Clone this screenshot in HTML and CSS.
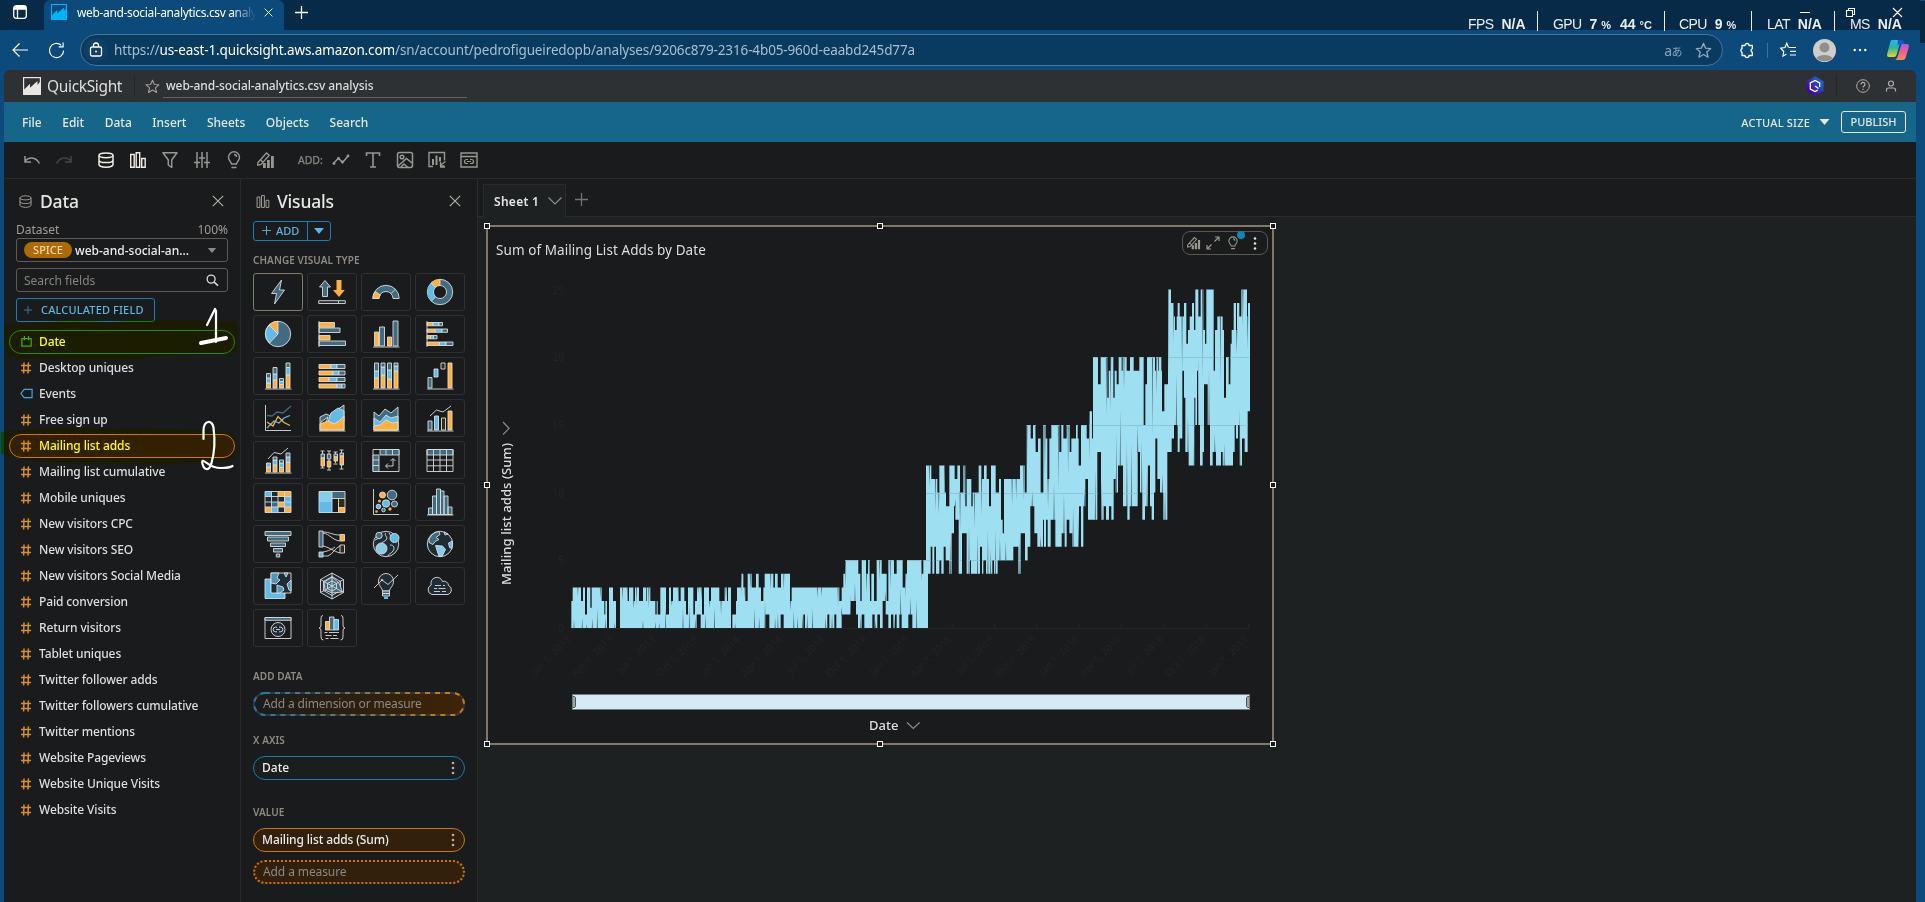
FILE: index.html
```html
<!DOCTYPE html>
<html lang="en">
<head>
<meta charset="utf-8">
<title>web-and-social-analytics.csv analysis</title>
<link rel="stylesheet" href="styles.css">
</head>
<body>
<svg class="defs" width="0" height="0">
  <symbol id="hash" viewBox="0 0 10 12"><path d="M3 .5 2.6 11.500M7.400.500 7 11.500M0 3.500h10M0 8.500h10" fill="none" stroke="currentColor" stroke-width="1.500"/></symbol>
  <symbol id="db" viewBox="0 0 16 16"><g fill="none" stroke="currentColor" stroke-width="1.200"><ellipse cx="8" cy="3.500" rx="6.800" ry="2.500"/><path d="M1.200 3.500v9c0 1.400 3 2.700 6.800 2.700s6.800-1.300 6.800-2.700v-9M1.200 8c0 1.400 3 2.600 6.800 2.600s6.800-1.200 6.800-2.600"/></g></symbol>
  <symbol id="bars" viewBox="0 0 16 16"><path d="M.7 2.500h3.500v12.800H.7zM6.200.7h3.500v14.600H6.200zM11.700 6.500h3.500v8.800h-3.500z" fill="none" stroke="currentColor" stroke-width="1.200"/></symbol>
  <symbol id="x" viewBox="0 0 12 12"><path d="M.8.800l10.400 10.400M11.200.800.800 11.200" fill="none" stroke="currentColor" stroke-width="1.200"/></symbol>
  <symbol id="plus" viewBox="0 0 12 12"><path d="M6 0v12M0 6h12" fill="none" stroke="currentColor" stroke-width="1.200"/></symbol>
  <symbol id="tri" viewBox="0 0 10 6"><path d="M0 0h10L5 6z" fill="currentColor"/></symbol>
  <symbol id="chev" viewBox="0 0 14 8"><path d="M.5.500 7 7 13.500.500" fill="none" stroke="currentColor" stroke-width="1.200"/></symbol>
  <symbol id="star" viewBox="0 0 16 16"><path d="M8 1.300l2 4.500 4.800.4-3.700 3.200 1.200 4.900L8 11.700l-4.300 2.600 1.200-4.900L1.200 6.200l4.800-.4z" fill="none" stroke="currentColor" stroke-width="1.200" stroke-linejoin="round"/></symbol>
  <symbol id="bulb" viewBox="0 0 16 18"><path d="M5.500 13c0-2-3-3.200-3-6.700a5.500 5.500 0 0 1 11 0c0 3.500-3 4.700-3 6.700zM5.500 16.500h5M8 3.500c1.500 0 2.500 1 2.500 2.500" fill="none" stroke="currentColor" stroke-width="1.400"/></symbol>
  <symbol id="pencil" viewBox="0 0 18 18"><path d="M1 11.500 9.500 2l2.800 2.300L4 13.500l-3.500.7zM3.500 9l2.500 2.300" fill="none" stroke="currentColor" stroke-width="1.300"/><path d="M6 12h2.800v5H6zM10 9h2.800v8H10zM14 5h2.800v12H14z" fill="currentColor"/></symbol>
  <symbol id="dots" viewBox="0 0 4 14"><circle cx="2" cy="2" r="1.300" fill="currentColor"/><circle cx="2" cy="7" r="1.300" fill="currentColor"/><circle cx="2" cy="12" r="1.300" fill="currentColor"/></symbol>
  <symbol id="qs" viewBox="0 0 18 18"><path fill-rule="evenodd" fill="currentColor" d="M0 0h18v18H0zM1.200 1.200v11.300L7 6.800v4L14.500 4v4l2.300-3V1.200z"/></symbol>
</svg>

<div class="window">
  <header class="tabstrip">
    <svg class="workspaces" viewBox="0 0 14 14"><g fill="none" stroke="#fff" stroke-width="1.300"><rect x=".7" y=".7" width="12.600" height="12.600" rx="2.500"/><path d="M4.500 4v9M1 4h12"/></g><path d="M1 1h12v3H1z" fill="#fff"/></svg>
    <div class="tab">
      <svg class="tab-logo"><use href="#qs"/></svg>
      <span class="tab-title">web-and-social-analytics.csv analysis</span>
      <svg class="tab-x"><use href="#x"/></svg>
    </div>
    <svg class="tab-new"><use href="#plus"/></svg>
    <div class="winctl">
      <svg viewBox="0 0 104 12" width="104" height="12"><path d="M0 5.500h10M46.500 3.500h6v6h-6zM48.500 3.500v-2h6v6h-2M93 1l9 9M102 1l-9 9" fill="none" stroke="#fff" stroke-width="1.100"/></svg>
    </div>
    <div class="perf">
      <div class="fps"><span>FPS</span><b>N/A</b></div>
      <div class="gpu"><span>GPU</span><b>7 <small>%</small></b><b>44 <small>°C</small></b></div>
      <div class="cpu"><span>CPU</span><b>9 <small>%</small></b></div>
      <div class="lat"><span>LAT</span><b>N/A</b></div>
      <div class="ms"><span>MS</span><b>N/A</b></div>
    </div>
  </header>

  <div class="addressbar">
    <svg class="nav-back" viewBox="0 0 16 14"><path d="M16 7H1M7.500.500 1 7l6.500 6.500" fill="none" stroke="#fff" stroke-width="1.200"/></svg>
    <svg class="nav-reload" viewBox="0 0 18 18"><path d="M16.500 9a7.500 7.500 0 1 1-2.500-5.600M16 .5v4.700h-4.700" fill="none" stroke="#fff" stroke-width="1.200"/></svg>
    <div class="url">
      <span class="lock"><svg viewBox="0 0 14 16" width="14" height="16"><g fill="none" stroke="#fff" stroke-width="1.300"><rect x="1.500" y="5" width="11" height="9" rx="1.500"/><path d="M4.500 5V3.500a2.500 2.500 0 0 1 5 0V5"/></g><circle cx="7" cy="9.500" r="1" fill="#fff"/></svg></span>
      <span class="url-text">https://<em>us-east-1.quicksight.aws.amazon.com</em>/sn/account/pedrofigueiredopb/analyses/9206c879-2316-4b05-960d-eaabd245d77a</span>
      <span class="translate">a<i>あ</i></span>
      <svg class="fav"><use href="#star"/></svg>
    </div>
    <svg class="ext" viewBox="0 0 16 16"><path d="M3 3.500h3a2 2 0 0 1 4 0h3.300v3.300a1.700 1.700 0 0 0 0 3.300v3.400H10a2 2 0 0 1-4 0H3v-3.200a2 2 0 0 1 0-3.600z" fill="none" stroke="#fff" stroke-width="1.300" stroke-linejoin="round"/></svg>
    <i class="bar-sep"></i>
    <svg class="favs" viewBox="0 0 16 16"><path d="M8.500 5.500 6.800 1.300 5 5.500.7 6.200 3.700 9.500 3 14l3.500-2M9 5.500h7M10 9.300h6M10 13h6" fill="none" stroke="#fff" stroke-width="1.200"/></svg>
    <svg class="avatar" viewBox="0 0 23 23"><circle cx="11.500" cy="11.500" r="11.500" fill="#d0cecb"/><circle cx="11.500" cy="8.500" r="5" fill="#918f8c"/><path d="M3.500 19a9 5.500 0 0 1 16 0 11.500 11.500 0 0 1-16 0z" fill="#918f8c"/></svg>
    <svg class="more" viewBox="0 0 14 4"><circle cx="1.700" cy="2" r="1.200" fill="#fff"/><circle cx="7" cy="2" r="1.200" fill="#fff"/><circle cx="12.300" cy="2" r="1.200" fill="#fff"/></svg>
    <svg class="copilot" viewBox="0 0 22 20">
      <defs><linearGradient id="ca" x2="0" y2="1"><stop offset="0" stop-color="#2bb4f0"/><stop offset=".45" stop-color="#28b7a0"/><stop offset="1" stop-color="#f5d21c"/></linearGradient><linearGradient id="cb" x2="0" y2="1"><stop offset="0" stop-color="#b05ae0"/><stop offset=".5" stop-color="#f06090"/><stop offset="1" stop-color="#ff8c4a"/></linearGradient></defs>
      <path d="M5 0h9l-4.500 15Q9 17 7 17H2Q-.5 17 .3 13.500L3 3Q3.700 0 5 0z" fill="url(#ca)"/><path d="M11 0h4q1.500 0 2.500 4h-4.500q-2 0-2.500 2z" fill="#1757c8"/><path d="M14.500 4H20q2.500 0 1.700 3.500L19 16.500Q18 20 16 20H8.500Q10 19 11 15.500z" fill="url(#cb)"/>
    </svg>
  </div>

  <main class="page">
    <div class="brandbar">
      <svg class="brand-logo"><use href="#qs"/></svg>
      <span class="brand">QuickSight</span>
      <i class="brand-sep"></i>
      <svg class="brand-star"><use href="#star"/></svg>
      <span class="doc-name">web-and-social-analytics.csv analysis</span>
      <span class="brand-right">
        <svg class="q-icon" viewBox="0 0 18 20"><defs><linearGradient id="qg" x1="0" y1="1" x2="1" y2="0"><stop offset=".2" stop-color="#4b00a8"/><stop offset="1" stop-color="#0a84d8"/></linearGradient></defs><path d="M9 .3l8.500 4.900v9.600L9 19.700.5 14.800V5.200z" fill="url(#qg)"/><path d="M12.500 12.500 9 10M13.700 11V7L9 4.500 4.300 7v6L9 15.500l2.700-1.300" fill="none" stroke="#fff" stroke-width="1.300"/></svg>
        <i class="brand-sep"></i>
        <svg class="help" viewBox="0 0 14 14"><circle cx="7" cy="7" r="6.300" fill="none" stroke="currentColor"/><path d="M5 5.500a2 2 0 1 1 2.700 1.800q-.7.300-.7 1.200M7 9.700V11" fill="none" stroke="currentColor" stroke-width="1.200"/></svg>
        <svg class="user" viewBox="0 0 12 12"><circle cx="6" cy="3.500" r="2.500" fill="none" stroke="currentColor" stroke-width="1.200"/><path d="M1.500 11.500V10Q1.500 8 3.500 8h5q2 0 2 2v1.500" fill="none" stroke="currentColor" stroke-width="1.200"/></svg>
      </span>
    </div>

    <nav class="menubar">
      <span>File</span><span>Edit</span><span>Data</span><span>Insert</span><span>Sheets</span><span>Objects</span><span>Search</span>
      <div class="menu-right"><span class="size">ACTUAL SIZE</span><svg class="size-tri"><use href="#tri"/></svg><span class="publish">PUBLISH</span></div>
    </nav>

    <div class="toolbar">
      <svg viewBox="0 0 18 18"><path d="M2 5v6h6M2 10.500C5 6 12.500 5 16.500 12.500" fill="none" stroke="currentColor" stroke-width="1.500"/></svg>
      <svg class="dim" viewBox="0 0 18 18"><path d="M16 5v6h-6M16 10.500C13 6 5.500 5 1.500 12.500" fill="none" stroke="currentColor" stroke-width="1.500"/></svg>
      <svg class="on gap" viewBox="0 0 16 16"><g fill="none" stroke="currentColor" stroke-width="1.500"><ellipse cx="8" cy="3.300" rx="7" ry="2.400"/><path d="M1 3.500v9c0 1.400 3 2.700 7 2.700s7-1.300 7-2.700v-9M1 8c0 1.400 3 2.600 7 2.600S15 9.400 15 8"/></g></svg>
      <svg class="on" viewBox="0 0 16 16"><path d="M.7 2.500h3.500v12.800H.7zM6.200.7h3.500v14.600H6.200zM11.700 6.500h3.500v8.800h-3.500z" fill="none" stroke="currentColor" stroke-width="1.400"/></svg>
      <svg viewBox="0 0 18 18"><path d="M2 1.700h14L10.700 9v7.500L7.300 14V9z" fill="none" stroke="currentColor" stroke-width="1.500" stroke-linejoin="round"/></svg>
      <svg viewBox="0 0 18 18"><path d="M4 1v16M9 1v16M14 1v16M1 11.500h6M6 7h6M11 11.500h6" fill="none" stroke="currentColor" stroke-width="1.500"/></svg>
      <svg><use href="#bulb"/></svg>
      <svg><use href="#pencil"/></svg>
      <span class="add-label">ADD:</span>
      <svg viewBox="0 0 18 18"><path d="M1.500 12.500 6.500 7l4 4.500 6-7" fill="none" stroke="currentColor" stroke-width="1.500"/><circle cx="2" cy="12.500" r="1.400" fill="currentColor"/><circle cx="6.500" cy="7.500" r="1.400" fill="currentColor"/><circle cx="10.500" cy="11" r="1.400" fill="currentColor"/><circle cx="16" cy="5" r="1.400" fill="currentColor"/></svg>
      <svg viewBox="0 0 18 18"><path d="M2.500 5V2h13v3M9 2v14M6 16h6" fill="none" stroke="currentColor" stroke-width="1.600"/></svg>
      <svg viewBox="0 0 18 18"><g fill="none" stroke="currentColor" stroke-width="1.500"><rect x="1.500" y="1.500" width="15" height="15" rx="2"/><circle cx="6" cy="6" r="1.800"/><path d="M2 15 10.500 7.500 16 12M5 16l3-3 4 3.500"/></g></svg>
      <svg viewBox="0 0 18 18"><path d="M5 15.500H1V1.500h15.500v8" fill="none" stroke="currentColor" stroke-width="1.400"/><path d="M4 8h2v6H4zM7.500 4.500h2V14h-2zM11 6h2v4.500h-2z" fill="currentColor"/><path d="M17.500 10.500 12 14.500M12.500 11v4h4M17 16h-5" fill="none" stroke="currentColor" stroke-width="1.300"/></svg>
      <svg viewBox="0 0 18 18"><path d="M1 2h16v14H1zM1 5.500h16" fill="none" stroke="currentColor" stroke-width="1.400"/><path d="M8 8.500H6.500a2 2 0 0 0 0 4H8M10 8.500h1.500a2 2 0 0 1 0 4H10M7 10.500h4" fill="none" stroke="currentColor" stroke-width="1.200"/></svg>
    </div>

    <div class="workspace">
      <section class="panel data-panel">
        <div class="panel-head"><svg class="panel-icon"><use href="#db"/></svg><h2>Data</h2><svg class="close"><use href="#x"/></svg></div>
        <div class="ds-row"><span>Dataset</span><span>100%</span></div>
        <div class="box select"><span class="spice">SPICE</span><span class="ds-name">web-and-social-an...</span><svg class="sel-tri"><use href="#tri"/></svg></div>
        <div class="box search"><span>Search fields</span><svg class="mag" viewBox="0 0 14 14"><circle cx="5.500" cy="5.500" r="4.300" fill="none" stroke="currentColor" stroke-width="1.400"/><path d="M8.700 8.700 13 12.500" stroke="currentColor" stroke-width="1.600"/></svg></div>
        <div class="calc"><svg><use href="#plus"/></svg><span>CALCULATED FIELD</span></div>
        <ul class="fields">
          <li class="picked-date"><svg class="cal" viewBox="0 0 13 13"><path d="M1 3h11v9H1zM4 0v5M9 0v5" fill="none" stroke="currentColor" stroke-width="1.400"/></svg>Date</li>
          <li><svg><use href="#hash"/></svg>Desktop uniques</li>
          <li><svg class="tag" viewBox="0 0 14 11"><path d="M13 1v9H4.500L1 5.500 4.500 1z" fill="none" stroke="currentColor" stroke-width="1.300"/></svg>Events</li>
          <li><svg><use href="#hash"/></svg>Free sign up</li>
          <li class="picked-measure"><svg><use href="#hash"/></svg>Mailing list adds</li>
          <li><svg><use href="#hash"/></svg>Mailing list cumulative</li>
          <li><svg><use href="#hash"/></svg>Mobile uniques</li>
          <li><svg><use href="#hash"/></svg>New visitors CPC</li>
          <li><svg><use href="#hash"/></svg>New visitors SEO</li>
          <li><svg><use href="#hash"/></svg>New visitors Social Media</li>
          <li><svg><use href="#hash"/></svg>Paid conversion</li>
          <li><svg><use href="#hash"/></svg>Return visitors</li>
          <li><svg><use href="#hash"/></svg>Tablet uniques</li>
          <li><svg><use href="#hash"/></svg>Twitter follower adds</li>
          <li><svg><use href="#hash"/></svg>Twitter followers cumulative</li>
          <li><svg><use href="#hash"/></svg>Twitter mentions</li>
          <li><svg><use href="#hash"/></svg>Website Pageviews</li>
          <li><svg><use href="#hash"/></svg>Website Unique Visits</li>
          <li><svg><use href="#hash"/></svg>Website Visits</li>
        </ul>
      </section>

      <section class="panel visuals-panel">
        <div class="panel-head"><svg class="panel-icon"><use href="#bars"/></svg><h2>Visuals</h2><svg class="close"><use href="#x"/></svg></div>
        <div class="add-btn"><span class="add-main"><svg><use href="#plus"/></svg>ADD</span><span class="add-more"><svg><use href="#tri"/></svg></span></div>
        <h3>CHANGE VISUAL TYPE</h3>
        <div class="types">
          <i class="sel"><svg viewBox="0 0 28 28"><path class="d w" d="M17.500 2 7.500 15.500h5L10.500 26 20.500 12h-5z"/></svg></i>
          <i><svg viewBox="0 0 28 28"><path class="d w" d="M7 2.500 12.500 9h-3v9.500H4.500V9h-3z"/><path class="o" d="M18.500 2h5v10h3.300L21 19l-6-7h3.500z"/><path class="n w" d="M.7 22.700h26.600v2.800H.7zM20.500 22.700v3"/></svg></i>
          <i><svg viewBox="0 0 28 28"><path class="d w" d="M.8 20.500a13.200 13.200 0 0 1 26.400 0H21a7 7 0 0 0-14 0z"/><path class="o w" d="M.8 20.500q0-4 2.500-7l5 3.500Q7 18.500 7 20.500z"/><path class="w" d="m23.500 11-4.300 4.500"/></svg></i>
          <i><svg viewBox="0 0 28 28"><circle class="d w" cx="14" cy="14" r="12.700"/><path class="l" d="M14 14 5.500 23A12.700 12.700 0 0 1 5 5z"/><path class="o" d="M14 14 5 5a12.700 12.700 0 0 1 9-3.700z"/><path class="w" d="M14 1.300V7M5 5l5 5M5.500 23l5-5"/><circle class="bg w" cx="14" cy="14" r="6.500"/></svg></i>

          <i><svg viewBox="0 0 28 28"><circle class="d w" cx="14" cy="14" r="12.700"/><path class="l w" d="M14 14 5.500 23A12.700 12.700 0 0 1 5 5z"/><path class="o w" d="M14 14 5 5a12.700 12.700 0 0 1 9-3.700z"/></svg></i>
          <i><svg viewBox="0 0 28 28"><path class="o w" d="M1 2.500h15.500v4.800H1zM1 15.500h11v4.500H1z"/><path class="d w" d="M1 8h21v4.500H1zM1 21h26.500v4.500H1z"/><path class="w" d="M1 1v26"/></svg></i>
          <i><svg viewBox="0 0 28 28"><path class="o w" d="M2.500 12h4v14h-4zM15.500 17h4v9h-4z"/><path class="d w" d="M7.500 7h5v19h-5zM21 1h5v25h-5z"/><path class="w" d="M1 27h26.500"/></svg></i>
          <i><svg viewBox="0 0 28 28"><path class="o w" d="M1 2.500h6v3.300H1zM1 9h8v3.300H1zM1 15.500h3.500v3.300H1zM1 22h12.500v3.500H1z"/><path class="l w" d="M7 2.500h6v3.300H7zM9 9h7v3.300H9zM4.500 15.500h3v3.300h-3zM13.500 22H20v3.500h-6.500z"/><path class="d w" d="M13 2.500h3.500v3.300H13zM16 9h5.500v3.300H16zM7.500 15.500h3.500v3.300H7.500zM20 22h7v3.500h-7z"/><path class="w" d="M1 1v26"/></svg></i>

          <i><svg viewBox="0 0 28 28"><path class="o w" d="M2.500 21h4v5h-4zM9 18h4v8H9zM15.500 22.500h4V26h-4zM22 13h4v13h-4z"/><path class="l w" d="M2.500 16h4v5h-4zM9 12h4v6H9zM15.500 19.500h4v3h-4zM22 5.500h4V13h-4z"/><path class="d w" d="M2.500 11.500h4V16h-4zM9 5.500h4V12H9zM15.500 16.500h4v3h-4zM22 1h4v4.500h-4z"/><path class="w" d="M1 27h26.500"/></svg></i>
          <i><svg viewBox="0 0 28 28"><path class="o w" d="M1 2.500h12v4H1zM1 9h14v4H1zM1 15.500h10v4H1zM1 22h18v4H1z"/><path class="l w" d="M13 2.500h6v4h-6zM15 9h6v4h-6zM11 15.500h8v4h-8zM19 22h5v4h-5z"/><path class="d w" d="M19 2.500h8v4h-8zM21 9h6v4h-6zM19 15.500h8v4h-8zM24 22h3v4h-3z"/></svg></i>
          <i><svg viewBox="0 0 28 28"><path class="o w" d="M2.500 16h4v10h-4zM9 13h4v13H9zM15.500 17h4v9h-4zM22 9h4v17h-4z"/><path class="l w" d="M2.500 9h4v7h-4zM9 5h4v8H9zM15.500 8h4v9h-4zM22 4h4v5h-4z"/><path class="d w" d="M2.500 1h4v8h-4zM9 1h4v4H9zM15.500 1h4v7h-4zM22 1h4v3h-4z"/><path class="w" d="M1 27h26.500"/></svg></i>
          <i><svg viewBox="0 0 28 28"><path class="d w" d="M2 15.500h4V26H2z"/><path class="l w" d="M8 7h4v8H8z"/><path class="k w" d="M15 1h4v6h-4z"/><path class="o w" d="M22 1h4v25h-4z"/><path class="w" d="M1 27h26.500"/></svg></i>

          <i><svg viewBox="0 0 28 28"><path class="w" d="M1.500 1v25.500H27"/><path class="sd" d="M3 11.500l5 .5 5-4 6 1 8-7"/><path class="sl" d="M3 24l7-7 5 2 5-5 6-2.500"/><path class="so" d="M3 18l6 4 5-9.500 6 6 6 3"/></svg></i>
          <i><svg viewBox="0 0 28 28"><path class="d w" d="M2 26V13l6-3 5 2 6-6 7-5v25z"/><path class="l w" d="M10 18l3-9 7-5 6 3v10l-6 4z"/><path class="k w" d="M3 18l7-5-3 8-4 3z"/><path class="o w" d="M2 26v-6l8-3 6 3 5-3 5-5v14z"/><path class="w" d="M1 27h26.500"/></svg></i>
          <i><svg viewBox="0 0 28 28"><path class="d w" d="M2 26V8l5 4 6-7 6 4 7-6v23z"/><path class="l w" d="M2 26V14l6 4 6-7 5 3 7-2v14z"/><path class="o w" d="M2 26v-4l6-1 6-5 6 3 6-1v8z"/><path class="w" d="M1 27h26.500"/></svg></i>
          <i><svg viewBox="0 0 28 28"><path class="d w" d="M2 17h4v9H2z"/><path class="l w" d="M8.500 12h4v14h-4z"/><path class="k w" d="M15.500 14h4v12h-4z"/><path class="o w" d="M22 7h4v19h-4z"/><path class="w" d="M4 12l6.500-6L17 8l8-6M1 27h26.500"/></svg></i>

          <i><svg viewBox="0 0 28 28"><path class="o w" d="M2.500 21h4v5h-4zM9 19h4v7H9zM15.500 21.500h4V26h-4zM22 16h4v10h-4z"/><path class="l w" d="M2.500 17h4v4h-4zM9 14h4v5H9zM15.500 17h4v4.500h-4zM22 11h4v5h-4z"/><path class="d w" d="M9 11h4v3H9zM15.500 14h4v3h-4zM22 7h4v4h-4z"/><path class="w" d="M4 13l6-6.500 7 1.500 7-6M1 27h26.500"/></svg></i>
          <i><svg viewBox="0 0 28 28"><path class="w" d="M4.500 5v17M11 5v19M17.500 6v11M23.500 4v19M2.500 5h4M9 5h4M15.500 6h4M21.500 4h4M2.500 22h4M9 24h4M15.500 18h4M21.500 23h4"/><path class="d w" d="M3 8h3.500v4H3zM9.300 8h3.500v5H9.300zM16 8h3.500v3H16zM22 7h3.500v3H22z"/><path class="o w" d="M3 12h3.500v8H3zM9.300 15h3.500v6H9.300zM16 11h3.500v4H16zM22 10h3.500v9H22z"/></svg></i>
          <i><svg viewBox="0 0 28 28"><path class="w" d="M1 3.500h26v22H1z"/><path class="d w" d="M8 3.500h19V9H8zM1 9h6v16.500H1z"/><path class="w" d="M14 3.500V9M20.500 3.500V9M1 14h6M1 19.500h6M21 13v7h-7m4.500-5 2.500-2.500 2.500 2.500M16 17.500 13.500 20l2.500 2.500"/></svg></i>
          <i><svg viewBox="0 0 28 28"><path class="d w" d="M1 3.500h26V9H1z"/><path class="w" d="M1 3.500h26v22H1zM1 14h26M1 19.800h26M7.500 3.500v22M14 3.500v22M20.500 3.500v22"/></svg></i>

          <i><svg viewBox="0 0 28 28"><path class="n" d="M1 3.500h26v21H1z"/><path class="l" d="M1 3.500h6.500v5H1zM20.500 8.500H27V14h-6.500zM7.500 19h6.500v5.500H7.500zM20.500 14H27v5h-6.500z"/><path class="o" d="M14 3.500h13v5H14zM1 19h6.500v5.500H1zM14 14h6.500v5H14zM20.500 19H27v5.500h-6.500z"/><path class="d" d="M7.500 14H14v5H7.500z"/><path class="w" d="M1 3.500h26v21H1zM1 8.500h26M1 14h26M1 19h26M7.500 3.500v21M14 3.500v21M20.500 3.500v21"/></svg></i>
          <i><svg viewBox="0 0 28 28"><path class="l" d="M1 3.500h13v21H1z"/><path class="p" d="M1 3.500h13V14H1z"/><path class="d" d="M14 3.500h13v7H14z"/><path class="k" d="M20.500 10.500H27v9h-6.500z"/><path class="o" d="M20.500 19.500H27v5h-6.500z"/><path class="w" d="M1 3.500h26v21H1zM14 3.500v21M14 10.500h13M20.500 10.500v14M20.500 19.500H27"/></svg></i>
          <i><svg viewBox="0 0 28 28"><path class="w" d="M1.500 1v25.500H27"/><circle class="d w" cx="20" cy="7" r="4.800"/><circle class="o w" cx="10.500" cy="7" r="3"/><circle class="l w" cx="14" cy="15.500" r="3.700"/><circle class="d w" cx="22.500" cy="16" r="3"/><circle class="l w" cx="6.500" cy="18.500" r="2.300"/><circle class="o" cx="7.500" cy="13" r="1.500"/><circle class="d w" cx="11.500" cy="22" r="1.800"/><circle class="o" cx="18" cy="21" r="1.700"/><circle class="o" cx="4.500" cy="23.500" r="1.300"/></svg></i>
          <i><svg viewBox="0 0 28 28"><path class="d w" d="M2.500 20h4v6.500h-4zM6.500 8h4v18.500h-4zM10.500 1h4v25.500h-4zM14.500 3h3.500v23.500h-3.500zM18 8h4v18.500h-4zM22 19h4v7.500h-4z"/><path class="w" d="M1 27h26.500"/></svg></i>

          <i><svg viewBox="0 0 28 28"><path class="d w" d="M1 1.500h26v4H1zM3.500 7h21v4h-21zM6.500 13h15v3.500h-15zM9.500 18.500h9V22h-9zM12.300 24h3.400v3h-3.400z"/></svg></i>
          <i><svg viewBox="0 0 28 28"><path class="w" d="M5 2c7 0 9 3 17 3M5 3c7 1 9 7 17 8M5 16c8 2 10 5 17 7M5 26h5c5-2 7-8 12-10M5 22c6-1 9-3 12-5"/><path class="d w" d="M1 1h4v16H1z"/><path class="l w" d="M1 22h4v5H1z"/><path class="o w" d="M22 4.500h4.500v6.500H22z"/><path class="k w" d="M22 15h4.500v8H22z"/></svg></i>
          <i><svg viewBox="0 0 28 28"><circle class="n w" cx="14" cy="14" r="12.700"/><path class="w" d="M14 3c-3 2 3 4 0 7s-6 2-4 5M18 15c4 0 5 3 3 6s-5 3-5 5M3 10l6-3M17 3l3 5"/><circle class="d w" cx="7" cy="5.500" r="3.200"/><circle class="l w" cx="22.500" cy="8" r="4.500"/><circle class="p w" cx="9.500" cy="18.500" r="5.500"/></svg></i>
          <i><svg viewBox="0 0 28 28"><circle class="n w" cx="14" cy="14" r="12.700"/><path class="d w" d="M3 9Q7 2 13 1.500l1 3-4 3 3 2-4 2-2 3-4-2z"/><path class="p w" d="M9.500 15.500l7 .5 3 3.500-3.500 7h-3z"/><path class="l w" d="M26.500 11l-4 2 1 4.500 2.500 1z"/><path class="d w" d="M18 2l4 2-3 1z"/></svg></i>

          <i><svg viewBox="0 0 28 28"><path class="l w" d="M1 7h6v13h14v6.500H1z"/><path class="n w" d="M7 1h20v20H7z"/><path class="d2 w" d="M7 1h8l-2 5 3 2-4 4-5-1zM13 13l6 2 1 3-4 3h-3zM20 1h4l-2 4zM27 8l-4 4 2 6 2 1z"/></svg></i>
          <i><svg viewBox="0 0 28 28"><path class="n w" d="M14 1l11.500 6.500v13L14 27 2.500 20.500v-13zM14 4.500l8.500 5v9l-8.500 5-8.500-5v-9z"/><path class="d w" d="M14 5l7 6 3.500 9L14 21 7 18 6 10z"/><path class="w" d="M14 1v26M2.500 7.500l23 13M25.500 7.500l-23 13M14 9l4.500 2.500v5L14 19l-4.500-2.500v-5z"/></svg></i>
          <i><svg viewBox="0 0 28 28"><path class="n w" d="M10.500 19c0-3-4-4.500-4-10a7.500 7.500 0 0 1 15 0c0 5.500-4 7-4 10z"/><path class="d w" d="M10.500 19h7v2.500h-7zM10.500 21.500h7V24h-7z"/><path class="l" d="M12 24.500h4v2.500h-4z"/><path class="w" d="M2 16l8-8 6 4.500L26 3"/><circle class="w" cx="10" cy="8" r=".8"/></svg></i>
          <i><svg viewBox="0 0 28 28"><path class="n w" d="M6 22.500a5 5 0 0 1-.8-9.500A5.800 5.800 0 0 1 16.500 9.500a4.500 4.500 0 0 1 6 4 4.800 4.800 0 0 1-.5 9z"/><path class="w" d="M9 13.500h6M17 13.500h2M8 16.500h3M12.500 16.500h7M8 19.500h6M16 19.500h4"/></svg></i>

          <i><svg viewBox="0 0 28 28"><path class="w" d="M1 3.500h26v21H1z"/><path class="d w" d="M1 3.500h26v2.800H1z"/><circle class="n w" cx="14" cy="15.500" r="7"/><path class="w" d="M13 13.200h-1.500a2.300 2.300 0 0 0 0 4.600H13M15 13.200h1.500a2.300 2.300 0 0 1 0 4.600H15M12 15.500h4"/></svg></i>
          <i><svg viewBox="0 0 28 28"><path class="o w" d="M7.500 7.500h4v8.500h-4z"/><path class="d w" d="M11.500 3h4.500v13h-4.500z"/><path class="l w" d="M16 5.500h4.500V16H16z"/><path class="w" d="M5 1.500Q3 1.500 3 4v7q0 3-2 3 2 0 2 3v6q0 3 2.500 3M23 1.500q2 0 2 2.500v7q0 3 2 3-2 0-2 3v6q0 3-2.500 3M6.500 18.500h3M11 18.500h10M7.500 21.500h6M15 21.500h4M7.500 24.500h3M12.500 24.500h8"/></svg></i>
        </div>
        <h3 class="w1">ADD DATA</h3>
        <div class="well mixed"><svg class="dash" viewBox="0 0 212 24"><defs><linearGradient id="mg"><stop offset="0" stop-color="#1a7ab0"/><stop offset="1" stop-color="#d07a06"/></linearGradient></defs><rect x="1" y="1" width="210" height="22" rx="11" fill="none" stroke="#343739" stroke-width="2"/><rect x="1" y="1" width="210" height="22" rx="11" fill="none" stroke="url(#mg)" stroke-width="2" stroke-dasharray="5 5"/></svg>Add a dimension or measure</div>
        <h3 class="w2">X AXIS</h3>
        <div class="well dim-well">Date<svg><use href="#dots"/></svg></div>
        <h3 class="w3">VALUE</h3>
        <div class="well val-well">Mailing list adds (Sum)<svg><use href="#dots"/></svg></div>
        <div class="well empty">Add a measure</div>
      </section>

      <section class="sheet">
        <div class="sheet-tabs"><div class="sheet-tab"><b>Sheet 1</b><svg><use href="#chev"/></svg></div><svg class="sheet-add"><use href="#plus"/></svg></div>
        <div class="canvas">
          <div class="visual">
            <div class="visual-head">
              <span class="visual-title">Sum of Mailing List Adds by Date</span>
              <div class="visual-tools">
                <svg class="t1"><use href="#pencil"/></svg>
                <svg class="t2" viewBox="0 0 14 14"><path d="M8.500 5.500 13 1M9 1h4v4M5.500 8.500 1 13M1 9v4h4" fill="none" stroke="currentColor" stroke-width="1.200"/></svg>
                <svg class="t3"><use href="#bulb"/></svg>
                <svg class="t4"><use href="#dots"/></svg>
                <i class="dot"></i>
              </div>
            </div>
            <svg class="plot" viewBox="488 267 784 476" width="784" height="476">
              <defs><clipPath id="in-series"><path id="series-clip"/></clipPath></defs>
              <g id="axes"></g>
              <path id="series" fill="#9fdff2"/>
              <g id="grid" clip-path="url(#in-series)"></g>
              <rect x="572.500" y="694.500" width="677" height="15" fill="#d4ebf7" stroke="#737a7e"/>
              <path d="M573 696.500h1.500l1 1v9l-1 1H573M1249 696.500h-1.500l-1 1v9l1 1h1.500" fill="#9aa5ab" stroke="#4e5558"/>
              <text class="axis-title" x="869" y="730" textLength="29.500">Date</text>
              <path class="axis-chev" d="M907 722.500l6.300 6 6.300-6M503 422l6 6.300-6 6.300"/>
              <text class="axis-title" transform="translate(511 585) rotate(-90)" textLength="142">Mailing list adds (Sum)</text>
            </svg>
            <i class="h nw"></i><i class="h n1"></i><i class="h ne"></i><i class="h e"></i><i class="h se"></i><i class="h s"></i><i class="h sw"></i><i class="h w1x"></i>
          </div>
        </div>
      </section>
    </div>
  </main>

  <i class="edge"></i>
  <svg class="marker" viewBox="0 0 245 480"><path d="M4 325q60-6 105-3 60-4 128 0v30q-30 5-70 3-40 8-110 4-25 2-50-4 0-8-3-12z"/><path d="M1 432q50-6 110-3 60-1 115 3 8 0 9 6v20q-40 8-110 6-60 0-90-3L1 454z"/></svg>
  <svg class="pen" viewBox="0 0 245 490"><path d="M207 325l8-16 1 2v31"/><path class="base" d="M201 343l25-5"/><path d="M203.500 439v-8c0-11 9-12 10-3 2 14 0 28-2 35-2 8-7 8-9 1q-1-4 1-3c6 3 8 7 17 7q9 0 12-2"/></svg>
</div>
<script src="app.js"></script>
</body>
</html>
```
FILE: styles.css
```css
* { box-sizing: border-box; }
body { margin: 0; background: #0b4a7a; font-family: "Noto Sans", "Open Sans", sans-serif; font-size: 12px; color: #dedede; }
h2, h3, ul { margin: 0; padding: 0; font-weight: 500; }
svg { display: block; flex: none; overflow: visible; }
span, b { white-space: nowrap; }
.defs { position: absolute; }
.window { position: relative; width: 1925px; height: 902px; overflow: hidden; display: flex; flex-direction: column; }

/* browser chrome */
.tabstrip { position: relative; height: 30px; width: 1920px; background: #062a47; display: flex; flex: none; }
.workspaces { width: 14px; height: 14px; margin: 5px 17px 0 13px; }
.tab { width: 240px; background: #0b4a7a; border-radius: 6px 6px 0 0; display: flex; align-items: center; padding: 0 11px 6px 7px; }
.tab-logo { width: 16px; height: 16px; color: #00b5f5; }
.tab-title { width: 179px; overflow: hidden; margin-left: 10px; color: #fff; font-size: 12px; letter-spacing: -0.35px; -webkit-mask-image: linear-gradient(90deg, #000 155px, transparent 179px); mask-image: linear-gradient(90deg, #000 155px, transparent 179px); }
.tab-x { width: 9px; height: 9px; margin-left: 8px; color: #fff; }
.tab-new { width: 13px; height: 13px; margin: 6px 0 0 11px; color: #fff; }
.winctl { position: absolute; right: 16px; top: 7px; }
.winctl svg { width: 104px; }
.perf { position: absolute; left: 1453px; top: 11px; height: 20px; display: flex; font: 14px/27px "Liberation Sans", sans-serif; color: #e9eef2; overflow: hidden; }
.perf div { height: 20px; display: flex; padding-left: 15px; border-right: 1px solid #e9eef2; }
.perf span { letter-spacing: -0.6px; margin-right: 8px; }
.perf small { font-size: 11px; }
.perf b { margin-right: 9px; }
.fps { width: 85px; }
.gpu { width: 127px; }
.perf .cpu { width: 87px; padding-left: 14px; }
.perf .lat { width: 83px; padding-left: 15px; }
.perf .ms { width: 75px; border: 0; }
.edge { position: absolute; left: 1920px; top: 1px; width: 5px; height: 42px; background: #052741; }

.addressbar { height: 40px; flex: none; display: flex; align-items: center; padding-left: 12px; }
.nav-back { width: 16px; height: 14px; }
.nav-reload { width: 17px; height: 17px; margin: 0 15px 0 20px; }
.url { width: 1643px; height: 32px; border: 1px solid #4a7496; border-radius: 16px; background: #093a60; display: flex; align-items: center; padding-right: 10px; }
.lock { width: 24px; height: 24px; border-radius: 12px; background: #103f66; display: flex; align-items: center; justify-content: center; margin-left: 3px; }
.url-text { margin-left: 6px; font-size: 13.500px; color: #a9bfd1; letter-spacing: -0.13px; flex: 1; }
.url-text em { font-style: normal; color: #fff; }
.translate { color: #8ea5b7; font-size: 14px; margin-right: 13px; letter-spacing: -0.5px; }
.translate i { font: 11px "Noto Sans CJK JP", sans-serif; }
.fav { width: 17px; height: 17px; color: #93a8b9; }
.ext { width: 16px; height: 16px; margin-left: 16px; }
.bar-sep { width: 1px; height: 15px; background: #3f719b; margin: 0 12px; }
.favs { width: 16px; height: 16px; }
.avatar { width: 23px; height: 23px; margin-left: 17px; }
.more { width: 14px; height: 4px; margin: 0 20px 0 17px; }
.copilot { width: 22px; height: 20px; }

/* application */
.page { width: 1912px; height: 832px; margin-left: 4px; border-radius: 7px 7px 0 0; overflow: hidden; background: #1a1b1c; display: flex; flex-direction: column; }
.brandbar { height: 32px; background: #2e3133; display: flex; align-items: center; padding-left: 19px; flex: none; }
.brand-logo { width: 18px; height: 18px; color: #e9e6e1; }
.brand { font-size: 15.500px; margin-left: 6px; width: 87px; letter-spacing: -0.35px; color: #dedede; }
.brand-sep { width: 1px; height: 22px; background: #242628; }
.brand-star { width: 15px; height: 15px; margin: 0 3px 0 10px; color: #a09f9c; }
.doc-name { width: 304px; height: 22px; line-height: 19px; border-bottom: 1px solid #66625c; padding-left: 3px; margin-top: 1px; font-size: 12px; font-weight: 500; letter-spacing: -0.08px; }
.brand-right { margin-left: auto; display: flex; align-items: center; color: #b3b0ab; }
.q-icon { width: 18px; height: 20px; margin-right: 12px; }
.help { width: 14px; height: 14px; margin-left: 19px; }
.user { width: 12px; height: 12px; margin: 0 19px 0 15px; }
.menubar { height: 40px; flex: none; background: #16668a; display: flex; align-items: center; gap: 20.500px; padding-left: 18px; padding-right: 10px; color: #e6e6e4; font-weight: 500; }
.menu-right { margin-left: auto; display: flex; align-items: center; font-size: 11px; }
.size { letter-spacing: 0.2px; }
.size-tri { width: 11px; height: 6px; margin: 0 11px 0 9px; }
.publish { width: 65px; height: 22px; line-height: 20px; border: 1px solid #e6e6e4; border-radius: 3px; text-align: center; }
.toolbar { height: 37px; flex: none; border-bottom: 1px solid #2b2a2a; display: flex; align-items: center; gap: 14px; padding-left: 19px; color: #999793; }
.toolbar svg { width: 18px; height: 18px; }
.toolbar .dim { color: #434547; }
.toolbar .on { color: #efece6; width: 16px; height: 16px; margin: 0 1px; }
.toolbar .gap { margin-left: 11px; }
.add-label { width: 29px; margin: 0 -9px 0 9px; font-size: 10.500px; color: #8a8782; -webkit-text-stroke: 0.25px; }
.workspace { flex: 1; display: flex; }
.panel { border-right: 1px solid #2a2c2c; position: relative; }
.data-panel { width: 237px; padding: 0 12px; }
.visuals-panel { width: 237px; padding: 0 12px; }
.panel-head { display: flex; align-items: center; height: 44px; padding-left: 3px; }
.panel-icon { width: 13px; height: 13px; color: #a3a09b; margin-right: 8px; }
.visuals-panel .panel-icon { width: 14px; margin-right: 7px; }
.panel-head h2 { font-size: 17.500px; flex: 1; letter-spacing: -0.2px; color: #e6e6e4; padding-bottom: 1px; }
.close { width: 12px; height: 12px; margin-right: 4px; color: #b0ada8; }
.ds-row { display: flex; justify-content: space-between; height: 15px; line-height: 13px; color: #a09c96; }
.box { height: 24px; border: 1px solid #5e5a55; border-radius: 3px; display: flex; align-items: center; padding-left: 7px; }
.select { color: #ececea; font-weight: 500; }
.spice { width: 48px; height: 16px; line-height: 16px; border-radius: 8px; background: #b06a00; color: #ecd9bd; text-align: center; font-size: 11px; margin-right: 3px; }
.ds-name { flex: 1; }
.sel-tri { width: 10px; height: 5px; margin-right: 10px; color: #8d8a86; }
.search { margin-top: 6px; color: #87837f; }
.search span { flex: 1; }
.mag { width: 13px; height: 13px; margin-right: 8px; color: #dedcd8; }
.calc { width: 139px; height: 24px; margin-top: 6px; border: 1px solid #1a80b4; border-radius: 3px; display: flex; align-items: center; padding: 0 0 1px 7px; color: #59b8e4; font-size: 11px; font-weight: 500; letter-spacing: 0.15px; }
.calc svg { width: 8px; height: 8px; margin-right: 9px; opacity: 0.7; }
.fields { list-style: none; margin: 8px -7px 0; display: flex; flex-direction: column; gap: 2px; font-weight: 500; letter-spacing: -0.13px; }
.fields li { height: 24px; border: 1px solid transparent; border-radius: 12px; display: flex; align-items: center; padding: 0 0 1px 11px; white-space: nowrap; }
.fields svg { width: 10px; height: 12px; margin-right: 8px; color: #d98f2e; }
.fields .cal, .fields .tag { width: 13px; height: 11px; margin: 0 6px 0 -1px; color: #47a3da; }
.fields .picked-date { border-color: #2a8a9d; background: #1b1c1c; color: #fff; }
.fields .cal { color: #4cac80; }
.fields .picked-measure { border-color: #cc7a0a; background: #32200a; color: #fff; }

.add-btn { width: 78px; height: 20px; margin-top: -2px; border: 1px solid #1a80b4; border-radius: 3px; display: flex; color: #59b8e4; font-size: 11px; font-weight: 500; }
.add-main { width: 54px; border-right: 1px solid #1a80b4; display: flex; align-items: center; padding: 0 0 1px 8px; }
.add-main svg { width: 9px; height: 9px; margin-right: 5px; }
.add-more { flex: 1; display: flex; align-items: center; justify-content: center; }
.add-more svg { width: 10px; height: 6px; }
h3 { font-size: 10px; font-weight: 600; line-height: 14px; letter-spacing: 0.08px; color: #8e8b87; margin-top: 12px; }
.types { display: grid; grid-template-columns: repeat(4, 50px); grid-auto-rows: 38px; gap: 4px; margin-top: 6px; }
.types i { border: 1px solid #2f3231; border-radius: 3px; display: flex; align-items: center; justify-content: center; }
.types .sel { border-color: #85796b; }
.types svg { width: 28px; height: 28px; fill: none; }
.types .w { stroke: #dedddb; stroke-width: 0.9; }
.types .d { fill: #416b80; }
.types .d2 { fill: #4f96ba; }
.types .l { fill: #5fbce8; }
.types .p { fill: #87cdea; }
.types .o { fill: #ffb03b; }
.types .k { fill: #35291a; }
.types .n { fill: #1f2c36; }
.types .bg { fill: #1a1b1c; }
.types .sd { stroke: #416b80; stroke-width: 1.300; }
.types .sl { stroke: #5fbce8; stroke-width: 1.300; }
.types .so { stroke: #ffb03b; stroke-width: 1.300; }
h3.w1 { margin-top: 22px; }
h3.w2 { margin-top: 17px; }
h3.w3 { margin-top: 25px; }
.well { position: relative; height: 24px; border-radius: 12px; margin-top: 9px; display: flex; align-items: center; justify-content: space-between; padding: 0 10px; line-height: 22px; white-space: nowrap; }
.mixed { background: linear-gradient(90deg, #1a1b1c, #402404); color: #8d8880; letter-spacing: -0.15px; }
.dash { position: absolute; left: 0; top: 0; width: 212px; height: 24px; }
.well svg:not(.dash) { width: 4px; height: 14px; color: #b5b2ad; }
.dim-well, .val-well { color: #ececea; padding: 0 9px 0 8px; font-weight: 500; }
.dim-well { border: 1px solid #1a7aaf; background: #1a1e1f; }
.val-well { border: 1px solid #c87808; background: #32200a; letter-spacing: -0.12px; }
.empty { border: 2px dotted #c87808; background: #32200a; color: #8d8880; padding-left: 8px; margin-top: 8px; letter-spacing: -0.1px; }

.sheet { flex: 1; display: flex; flex-direction: column; }
.sheet-tabs { height: 38px; border-bottom: 1px solid #2a2c2d; display: flex; align-items: flex-end; padding-left: 5px; }
.sheet-tab { width: 83px; height: 33px; margin-bottom: -1px; background: #1d2122; border: 1px solid #292c2d; border-bottom: 0; display: flex; align-items: center; padding-left: 10px; }
.sheet-tab b { font-weight: 600; width: 54px; color: #e6e6e4; letter-spacing: 0.3px; }
.sheet-tab svg { width: 14px; height: 8px; color: #8f8d89; }
.sheet-add { width: 13px; height: 13px; margin: 0 0 10px 9px; color: #777572; }
.canvas { flex: 1; background: #1d2122; padding: 8px 0 0 8px; }
.visual { position: relative; width: 788px; height: 520px; border: 2px solid #837868; background: #1a1b1c; }
.visual-head { height: 40px; display: flex; justify-content: space-between; }
.visual-title { font-size: 13.500px; letter-spacing: 0.07px; margin: 14px 0 0 8px; }
.visual-tools { position: relative; width: 86px; height: 24px; margin: 4px 4px 0 0; border: 1px solid #5e564d; border-radius: 8px; display: flex; align-items: center; padding-left: 4px; color: #9c9994; }
.t1 { width: 14px; height: 14px; margin-right: 5px; }
.t2 { width: 14px; height: 14px; margin-right: 7px; }
.t3 { width: 12px; height: 14px; margin-right: 14px; }
.t4 { width: 4px; height: 15px; color: #e4e1dc; }
.dot { position: absolute; left: 54px; top: -1px; width: 8px; height: 8px; border-radius: 50%; background: #1385bd; }
.axis-title { font-size: 13px; font-weight: 500; fill: #dedede; }
.axis-chev { fill: none; stroke: #8f8d89; stroke-width: 1.200; }
.tick { font-size: 10px; fill: #222526; text-anchor: end; }
.h { position: absolute; width: 6px; height: 6px; border: 1px solid #fff; background: #1a1b1c; }
.nw, .w1x, .sw { left: -4px; }
.ne, .e, .se { right: -4px; }
.n1, .s { left: 389px; }
.nw, .n1, .ne { top: -4px; }
.sw, .s, .se { bottom: -4px; }
.e, .w1x { top: 255px; }

/* annotations */
.marker { position: absolute; left: 0; top: 0; width: 245px; height: 480px; mix-blend-mode: multiply; fill: #ffff00; }
.pen { position: absolute; left: 0; top: 0; width: 245px; height: 490px; fill: none; stroke: #fff; stroke-width: 2.200; stroke-linecap: round; stroke-linejoin: round; }
.base { stroke-width: 4; }
```
FILE: app.js
```js
// Daily values reduced to runs: "endX:value", X in thirds of a pixel from each section's origin.
const sections = [
  { x0: 480, from: 274,
    top: "278:2 303:3 309:2 315:3 321:1 331:3 335:1.5 365:3 373:2 376:1 381:2 387:0 399:3 408:2 420:0 443:3 447:2 460:3 465:2 477:3 489:2 499:3 501:2 511:3 526:2 530:1 533:2 541:1 558:3 567:1 573:3 579:2 596:3 602:2 613:3 618:2 624:1 640:3 645:1 651:2 666:3 672:1 687:3 693:2 718:3 734:2 741:3 744:2 753:3 757:0 768:1 771:2 783:3 790:4 796:3 803:2 815:4 828:3 836:4 843:3 850:2 854:3 880:4 885:3 893:4 903:3 930:4 935:2 1078:3 1085:2 1090:3 1095:4 1135:5 1141:4 1145:2 1158:5 1164:4 1170:5 1174:2 1182:4 1190:2 1205:5 1220:4 1225:2 1242:5 1250:4 1268:5 1275:3 1281:4 1325:5 1330:4 1338:5 1340:12",
    bottom: "381:0 387:0 650:0 662:1 752:0 768:0 856:0 868:1 902:0 911:1 970:0 975:1 1042:0 1048:1 1063:0 1069:1 1085:0 1112:1 1128:2 1134:1 1145:0 1153:1 1177:0 1184:1 1192:0 1200:1 1208:0 1217:2 1225:1 1233:0 1240:1 1245:0 1250:1 1258:0 1265:1 1285:0 1297:1 1340:0" },
  { x0: 900, from: 80,
    top: "94:12 112:11 118:10 134:12 138:10 148:9 164:12 172:11 180:12 190:10 196:12 200:9 214:11 218:9 236:10 244:12 252:11 260:12 267:11 273:9 287:12 297:10 303:11 308:8 312:7 360:11 374:12 380:10 392:15 399:14 407:15 414:13 422:14 430:10 437:15 442:14 448:11 454:14 478:15 484:13 490:15 500:14 509:15 514:13 528:14 533:15 536:14 543:12 560:15 567:14 576:16 579:14 594:20 602:18 622:20 626:17 632:19 640:20 644:17 650:19 656:18 665:20 668:19 680:20 690:19 701:20 718:19 731:20 736:15 741:18 765:20 768:19 774:20 776:19 784:20 786:19 793:16 804:18 813:25 822:24 825:23 830:22 833:23 839:24 852:23 859:24 864:21 869:22 876:23 882:24 886:22 895:25 902:23 910:25 915:22 919:21 941:25 945:19 952:22 968:23 972:22 978:17 986:20 991:18 995:21 1001:22 1008:24 1011:22 1018:24 1024:23 1041:25 1044:23 1050:24",
    bottom: "84:0 92:4 97:6 103:4 108:6 118:4 124:5 131:4 137:6 148:5 155:4 162:7 166:9 176:8 186:4 200:7 210:4 213:5 240:4 246:6 250:4 258:5 277:4 282:5 293:4 340:5 355:6 362:4 375:7 383:5 391:6 403:9 412:7 429:6 432:8 438:6 443:8 452:6 466:8 485:6 494:7 500:6 508:8 517:7 537:6 543:9 550:6 556:9 564:11 592:8 603:13 611:8 618:9 627:8 634:9 641:8 647:11 654:10 660:12 669:12 682:9 689:8 713:9 720:13 727:10 735:8 744:9 750:12 755:9 762:8 766:10 772:14 780:11 790:10 802:8 815:13 822:14 833:15 839:13 847:14 852:19 856:17 866:13 883:12 886:17 891:15 894:19 900:15 908:12 912:13 923:18 930:15 938:12 948:13 963:12 968:13 999:12 1004:13 1008:15 1014:14 1019:15 1026:12 1034:14 1043:13 1050:16" }
];
const yOf = v => 628 - v * 13.54;
const series = document.getElementById("series");
const grid = document.getElementById("grid");
const axes = document.getElementById("axes");
let seed = 11;
const rnd = () => (seed = (seed * 16807) % 2147483647) / 2147483647;
const runs = (s, from) => {
  let start = from;
  return s.split(" ").map(p => {
    const [end, v] = p.split(":").map(Number);
    const r = { a: start, b: end, v };
    start = end;
    return r;
  });
};
let d = "", notches = "";
for (const s of sections) {
  const X = u => (s.x0 + u / 3).toFixed(2);
  const top = runs(s.top, s.from), bot = runs(s.bottom, s.from);
  d += "M" + X(s.from) + " " + yOf(bot[0].v);
  for (const r of top) d += "L" + X(r.a) + " " + yOf(r.v) + "L" + X(r.b) + " " + yOf(r.v);
  for (const r of bot.reverse()) d += "L" + X(r.b) + " " + yOf(r.v) + "L" + X(r.a) + " " + yOf(r.v);
  d += "Z";
  const at = (list, u) => (list.find(r => u >= r.a && u < r.b) || list[0]).v;
  // hairline gaps left between neighbouring daily spikes
  for (let u = s.from + 8; u < top[top.length - 1].b - 6; u += 8 + rnd() * 12) {
    const t = at(top, u), b = at(bot, u), span = (t - b) * (0.2 + rnd() * 0.35);
    const x = s.x0 + u / 3;
    if (t - b < 1) continue;
    const up = rnd() < 0.55;
    const y0 = up ? yOf(b) + 1 : yOf(t) - 1, y1 = up ? yOf(b + span) : yOf(t - span);
    notches += `M${(x - 0.5).toFixed(2)} ${y0}h1L${x.toFixed(2)} ${y1}Z`;
  }
}
series.setAttribute("d", d);
document.getElementById("series-clip").setAttribute("d", d);
let g = `<path d="${notches}" fill="#1a1b1c" opacity=".65"/>`;
for (const v of [5, 10, 15, 20]) {
  g += `<path d="M571 ${Math.round(yOf(v)) + 0.5}H1249" stroke="#8cc6d8"/>`;
}
grid.innerHTML = g;
const months = ["Jan", "Apr", "Jul", "Oct"];
let a = '<path d="M571 628.500H1249" stroke="#242627"/>';
for (let v = 0; v <= 25; v += 5) a += `<text class="tick" x="564" y="${yOf(v) + 4}">${v}</text>`;
for (let i = 0; i < 17; i++) {
  const x = 571 + i * 42.350;
  a += `<path d="M${x} 624v4" stroke="#242627"/><text class="tick" transform="translate(${x} 640) rotate(-45)">${months[i % 4]} 1, ${2013 + Math.floor(i / 4)}</text>`;
}
axes.innerHTML = a;
```
